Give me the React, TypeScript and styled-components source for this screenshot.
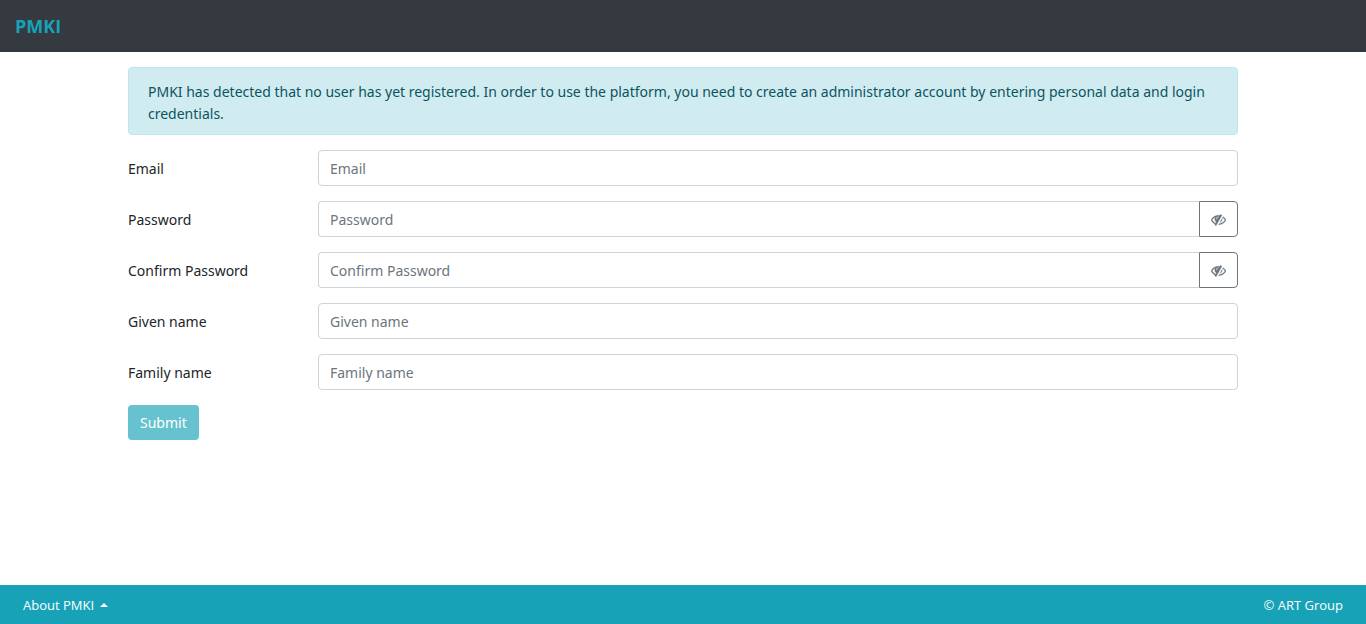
import React, { useState } from 'react';
import styled, { createGlobalStyle } from 'styled-components';

const GlobalStyle = createGlobalStyle`
  *, *::before, *::after { box-sizing: border-box; }
  body {
    margin: 0;
    background: #fff;
    color: #212529;
    font: 400 14px/22px "Segoe UI", "Noto Sans", sans-serif;
  }
`;

const Page = styled.div`
  min-height: 100vh;
  display: flex;
  flex-direction: column;
`;

const Header = styled.header`
  display: flex;
  align-items: center;
  height: 52px;
  padding: 0 15px;
  background: #343a40;
`;

const Brand = styled.a`
  color: #17a2b8;
  font-family: "Segoe UI", "Open Sans", sans-serif;
  font-size: 18px;
  font-weight: 700;
  text-decoration: none;
`;

const Main = styled.main`
  flex: 1;
  width: 100%;
  max-width: 1140px;
  margin: 0 auto;
  padding: 15px;
`;

const Alert = styled.div`
  margin-bottom: 15px;
  padding: 13px 19px 9px;
  border: 1px solid #bee5eb;
  border-radius: 4px;
  background: #d1ecf1;
  color: #0c5460;
`;

const Form = styled.form`
  display: flex;
  flex-direction: column;
  align-items: stretch;
  gap: 15px;
`;

const Row = styled.div`
  display: grid;
  grid-template-columns: 190px 1fr;
  align-items: center;
`;

const Label = styled.label`
  padding-top: 2px;
  color: #212529;
`;

const Group = styled.div`
  display: flex;
`;

const Input = styled.input<{ $joined?: boolean }>`
  flex: 1;
  min-width: 0;
  height: 36px;
  padding: 0 11px;
  border: 1px solid #ced4da;
  border-right-width: ${(p) => (p.$joined ? 0 : '1px')};
  border-radius: ${(p) => (p.$joined ? '4px 0 0 4px' : '4px')};
  background: #fff;
  color: #495057;
  font: inherit;
  &::placeholder { color: #6c757d; opacity: 1; }
`;

const RevealButton = styled.button`
  display: flex;
  align-items: center;
  justify-content: center;
  width: 39px;
  height: 36px;
  padding: 0;
  border: 1px solid #6c757d;
  border-radius: 0 4px 4px 0;
  background: #fff;
  color: #6c757d;
`;

const Submit = styled.button`
  align-self: flex-start;
  height: 35px;
  padding: 0 12px;
  border: 0;
  border-radius: 4px;
  background: #17a2b8;
  color: #fff;
  font: inherit;
  opacity: 0.65;
`;

const Footer = styled.footer`
  display: flex;
  align-items: center;
  justify-content: space-between;
  height: 39px;
  padding: 0 23px;
  background: #17a2b8;
  color: #fff;
  font-family: "Segoe UI", "Open Sans", sans-serif;
  font-size: 13px;
`;

const FooterButton = styled.button`
  display: flex;
  align-items: center;
  gap: 6px;
  padding: 0;
  border: 0;
  background: none;
  color: inherit;
  font: inherit;
`;

const Caret = styled.span`
  border: 4px solid transparent;
  border-top: 0;
  border-bottom-color: currentColor;
`;

const EyeSlash = () => (
  <svg
    width="15"
    height="15"
    viewBox="0 0 1792 1792"
    fill="currentColor"
    stroke="currentColor"
    strokeWidth="30"
    aria-hidden="true"
  >
    <path d="M555 1335l78-141q-87-63-136-159t-49-203q0-121 61-225-229 117-381 353 167 258 427 375zm389-759q0-20-14-34t-34-14q-125 0-214.500 89.500t-89.500 214.500q0 20 14 34t34 14 34-14 14-34q0-86 61-147t147-61q20 0 34-14t14-34zm363-191q0 7-1 9-106 189-316 567t-315 566l-49 89q-10 16-28 16-12 0-134-70-16-10-16-28 0-12 44-87-143-65-263.500-173t-208.500-245q-20-31-20-69t20-69q153-235 380-371t496-136q89 0 180 17l54-97q10-16 28-16 5 0 18 6t31 15.500 33 18.500 31.500 18.500 19.500 11.500q16 10 16 27zm37 447q0 139-79 253.500t-209 164.500l280-502q8 45 8 84zm448 128q0 35-20 69-39 64-109 145-150 172-347.500 267t-419.500 95l74-132q212-18 392.500-137t301.500-307q-115-179-282-294l63-112q95 64 182.500 153t144.500 184q20 34 20 69z" />
  </svg>
);

interface Field {
  id: string;
  label: string;
  type: string;
}

const fields: Field[] = [
  { id: 'email', label: 'Email', type: 'email' },
  { id: 'password', label: 'Password', type: 'password' },
  { id: 'confirm', label: 'Confirm Password', type: 'password' },
  { id: 'given', label: 'Given name', type: 'text' },
  { id: 'family', label: 'Family name', type: 'text' },
];

function FormField({ id, label, type }: Field) {
  const [visible, setVisible] = useState(false);
  const secret = type === 'password';
  return (
    <Row>
      <Label htmlFor={id}>{label}</Label>
      <Group>
        <Input id={id} type={visible ? 'text' : type} placeholder={label} $joined={secret} />
        {secret && (
          <RevealButton type="button" aria-label={`Show ${label}`} onClick={() => setVisible(!visible)}>
            <EyeSlash />
          </RevealButton>
        )}
      </Group>
    </Row>
  );
}

export default function App() {
  return (
    <Page>
      <GlobalStyle />
      <Header>
        <Brand href="#">PMKI</Brand>
      </Header>
      <Main>
        <Alert role="alert">
          PMKI has detected that no user has yet registered. In order to use the platform, you need to
          create an administrator account by entering personal data and login credentials.
        </Alert>
        <Form>
          {fields.map((f) => (
            <FormField key={f.id} {...f} />
          ))}
          <Submit type="submit" disabled>Submit</Submit>
        </Form>
      </Main>
      <Footer>
        <FooterButton type="button">
          About PMKI
          <Caret />
        </FooterButton>
        <span>© ART Group</span>
      </Footer>
    </Page>
  );
}
